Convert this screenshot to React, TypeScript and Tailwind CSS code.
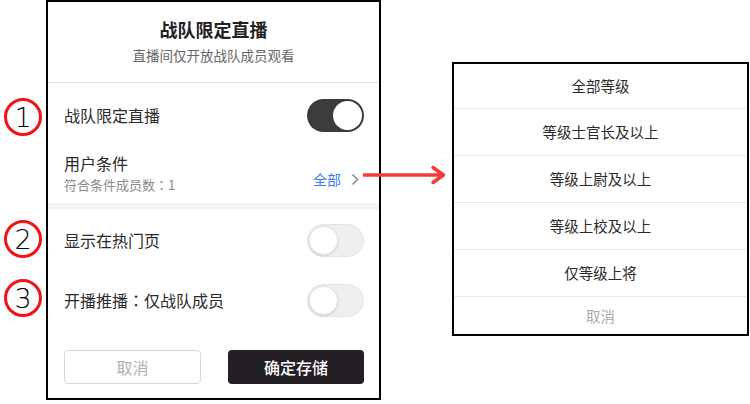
import React from 'react';

const cjk = { fontFamily: '"Noto Sans CJK SC", "Noto Sans", sans-serif' };
// centred full-width colon, as in the screenshot
const colon = <span style={{ fontFamily: '"Noto Sans CJK TC", sans-serif' }}>：</span>;

function Toggle({ on }: { on: boolean }) {
  if (on) {
    return (
      <div className="w-[57px] h-[33px] rounded-full bg-[#3b3b3b] flex items-center justify-end px-[2px]">
        <div className="w-[29px] h-[29px] rounded-full bg-white" />
      </div>
    );
  }
  return (
    <div className="w-[57px] h-[33px] rounded-full bg-[#efefef] border border-[#e4e4e4] flex items-center px-[1px]">
      <div className="w-[29px] h-[29px] rounded-full bg-white border border-[#e6e6e6] shadow-sm" />
    </div>
  );
}

function Marker({ n, top }: { n: number; top: string }) {
  return (
    <div
      className={`absolute left-[4px] ${top} w-[38px] h-[38px] rounded-full border-[3px] border-[#f01414] flex items-center justify-center text-[27px] leading-none text-black`}
      style={{ fontFamily: '"DejaVu Sans", sans-serif', fontWeight: 300 }}
    >
      {n}
    </div>
  );
}

const levels = ['全部等级', '等级士官长及以上', '等级上尉及以上', '等级上校及以上', '仅等级上将'];

export default function App() {
  return (
    <div className="relative w-[750px] h-[404px] bg-white flex items-start" style={cjk}>
      {/* Settings sheet */}
      <div className="ml-[46px] w-[335px] h-[400px] border-2 border-black bg-white flex flex-col">
        <div className="h-[81px] shrink-0 pt-[16px] flex flex-col items-center border-b border-[#e3e3e3]">
          <h2 className="text-[18px] leading-[22px] font-bold text-[#222]">战队限定直播</h2>
          <p className="mt-[6px] text-[13.5px] leading-[18px] text-[#666]">直播间仅开放战队成员观看</p>
        </div>

        <div className="h-[64px] shrink-0 pl-[16px] pr-[15px] flex items-center justify-between">
          <span className="text-[16px] text-[#2a2a2a]">战队限定直播</span>
          <Toggle on />
        </div>

        <div className="h-[56px] shrink-0 pl-[16px] pr-[20px] pt-[6px] flex justify-between">
          <div className="flex flex-col">
            <span className="text-[16px] leading-[20px] text-[#2a2a2a]">用户条件</span>
            <span className="mt-[3px] text-[13px] leading-[18px] text-[#8a8a8a]">符合条件成员数{colon}1</span>
          </div>
          <div className="flex items-center gap-[10px] pt-[2px]">
            <span className="text-[14px] text-[#3a7cf3]">全部</span>
            <svg width="8" height="13" viewBox="0 0 8 13" fill="none">
              <path d="M1.5 1.5 L6.5 6.5 L1.5 11.5" stroke="#8a8a8a" strokeWidth="1.5" />
            </svg>
          </div>
        </div>

        <div className="h-[7px] shrink-0 bg-[#f5f5f5]" />

        <div className="h-[60px] shrink-0 pl-[16px] pr-[15px] flex items-center justify-between">
          <span className="text-[16px] text-[#2a2a2a]">显示在热门页</span>
          <Toggle on={false} />
        </div>

        <div className="h-[60px] shrink-0 pl-[16px] pr-[15px] flex items-center justify-between">
          <span className="text-[16px] text-[#2a2a2a]">开播推播{colon}仅战队成员</span>
          <Toggle on={false} />
        </div>

        <div className="mt-[20px] pl-[16px] pr-[15px] flex gap-[27px]">
          <button className="w-[137px] h-[34px] rounded-[4px] border border-[#d8d8d8] bg-white text-[16px] text-[#b0b0b0]">
            取消
          </button>
          <button className="w-[136px] h-[34px] rounded-[4px] bg-[#231f24] text-[16px] font-medium text-white">
            确定存储
          </button>
        </div>
      </div>

      {/* Level picker */}
      <div className="ml-[71px] mt-[62px] w-[297px] border-2 border-black bg-white flex flex-col">
        {levels.map((l, i) => (
          <div
            key={l}
            className={`flex items-center justify-center text-[14.5px] text-[#2a2a2a] ${i === 0 ? 'h-[44px]' : 'h-[47px] border-t border-[#eaeaea]'}`}
          >
            {l}
          </div>
        ))}
        <div className="h-[38px] border-t border-[#eaeaea] flex items-center justify-center text-[14.5px] text-[#aaa]">
          取消
        </div>
      </div>

      {/* Annotations */}
      <Marker n={1} top="top-[98px]" />
      <Marker n={2} top="top-[220px]" />
      <Marker n={3} top="top-[279px]" />

      <svg className="absolute left-[360px] top-[165px]" width="90" height="20" viewBox="0 0 90 20" fill="none">
        <path d="M3 10 H82" stroke="#f43a3a" strokeWidth="3.5" />
        <path d="M73 2.5 L83.5 10 L73 17.5" stroke="#f43a3a" strokeWidth="3.5" strokeLinecap="round" strokeLinejoin="round" />
      </svg>
    </div>
  );
}
